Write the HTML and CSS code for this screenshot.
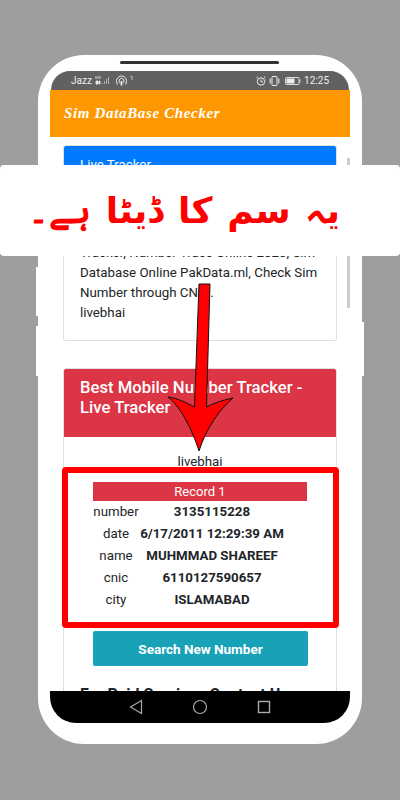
FILE: index.html
```html
<!DOCTYPE html>
<html lang="en">
<head>
  <meta charset="UTF-8">
  <meta name="viewport" content="width=device-width, initial-scale=1.0">
  <title>Sim DataBase Checker</title>
  <link rel="stylesheet" href="styles.css">
</head>
<body>
  <div class="phone">
    <div class="speaker"></div>
    <div class="side-key side-key-left-top"></div>
    <div class="side-key side-key-left-bottom"></div>
    <div class="side-key side-key-right"></div>

    <div class="screen">
      <div class="status-bar">
        <div class="status-group">
          <span>Jazz</span>
          <svg width="15" height="9" viewBox="0 0 15 9">
            <path d="M1 0v3M3 0v3M5 0v3M1 5h2v3H1zM4 5h1v3H4z" stroke="#eee" stroke-width=".8" fill="#eee"/>
            <path d="M7.500 8v-1M9.500 8V5M11.500 8V3M13.500 8V1" stroke="#bbb" stroke-width=".9" fill="none"/>
          </svg>
          <svg class="hotspot" width="14" height="11" viewBox="0 0 14 11" fill="none" stroke="#eee" stroke-width="1">
            <path d="M2.500 9.500C0 6 2.500 1 6.500 1s6.500 5 4 8.500"/>
            <path d="M4.500 8C3.300 6 4.500 3.300 6.500 3.300S9.700 6 8.500 8"/>
            <path d="M6.500 6v4.500" stroke-width="1.800"/>
          </svg>
          <sup class="status-one">1</sup>
        </div>
        <div class="status-group">
          <svg width="10" height="10" viewBox="0 0 10 10" fill="none" stroke="#eee" stroke-width="1">
            <circle cx="5" cy="5.500" r="3.700"/>
            <path d="M5 3.500v2.300h1.800M.5 2 2 .7M9.500 2 8 .7"/>
          </svg>
          <svg width="11" height="10" viewBox="0 0 11 10" fill="none" stroke="#eee" stroke-width="1">
            <rect x="3" y=".5" width="5" height="9" rx=".8"/>
            <path d="M1.200 2.500v5M9.800 2.500v5"/>
          </svg>
          <svg class="battery" width="16" height="8" viewBox="0 0 16 8">
            <rect x=".5" y=".5" width="13.500" height="7" rx="1" fill="none" stroke="#ddd"/>
            <rect x="1.500" y="1.500" width="8" height="5" fill="#eee"/>
            <rect x="14.500" y="2.500" width="1" height="3" fill="#ddd"/>
          </svg>
          <span>12:25</span>
        </div>
      </div>

      <header class="app-bar">Sim DataBase Checker</header>

      <main class="content">
        <section class="card">
          <div class="card-head card-head-blue">Live Tracker</div>
          <div class="card-body">
            <p>Tracker, Number Trace Online 2020, Sim Database Online PakData.ml, Check Sim Number through CNIC.</p>
            <p>livebhai</p>
          </div>
        </section>

        <section class="card card-result">
          <h2 class="card-head card-head-red">Best Mobile Number Tracker - Live Tracker</h2>
          <p class="result-author">livebhai</p>
          <div class="record">
            <div class="record-title">Record 1</div>
            <dl class="record-rows">
              <dt>number</dt><dd>3135115228</dd>
              <dt>date</dt><dd>6/17/2011 12:29:39 AM</dd>
              <dt>name</dt><dd>MUHMMAD SHAREEF</dd>
              <dt>cnic</dt><dd>6110127590657</dd>
              <dt>city</dt><dd>ISLAMABAD</dd>
            </dl>
          </div>
          <button class="search-btn">Search New Number</button>
          <h3 class="paid-title">For Paid Services Contact Us</h3>
        </section>
      </main>

      <div class="scrollbar"></div>

      <nav class="nav-bar">
        <svg width="14" height="16" viewBox="0 0 14 16" fill="none" stroke="#aaa" stroke-width="1.200"><path d="M12.500 1.500v13L1.500 8z"/></svg>
        <svg width="16" height="16" viewBox="0 0 16 16" fill="none" stroke="#aaa" stroke-width="1.200"><circle cx="8" cy="8" r="6.500"/></svg>
        <svg width="14" height="14" viewBox="0 0 14 14" fill="none" stroke="#aaa" stroke-width="1.400"><rect x="1.500" y="1.500" width="11" height="11"/></svg>
      </nav>
    </div>
  </div>

  <!-- things pasted over the screenshot -->
  <div class="banner"><span>یہ</span><span>سم</span><span>کا</span><span>ڈیٹا</span><span>ہے۔</span></div>
  <div class="red-box"></div>
  <svg class="arrow" width="70" height="172" viewBox="0 0 70 172">
    <path d="M32 1 43 1 39.500 124C47 120 56 117 66 115 52 127 39 146 32 168 25 146 13 123 1 114 10 115 20 120 27.500 124Z" fill="#f00" stroke="#111" stroke-width="1"/>
  </svg>
</body>
</html>
```

FILE: styles.css
```css
* {
  box-sizing: border-box;
}

html, body {
  height: 100%;
}

body {
  margin: 0;
  background-color: #9e9e9e;
  font-family: Roboto, sans-serif;
  color: #212529;
  overflow: hidden;
  position: relative;
}

.phone {
  position: relative;
  width: 324px;
  height: 689px;
  margin: 55px 0 0 38px;
  padding: 16px 12px 21px;
  background-color: #fff;
  border-radius: 46px;
}

.speaker {
  position: absolute;
  top: 6px;
  left: 82px;
  width: 159px;
  height: 3px;
  background-color: #333;
  border-radius: 2px;
}

.side-key {
  position: absolute;
  width: 3px;
  background-color: #fff;
}

.side-key-left-top {
  left: -2px;
  top: 212px;
  height: 49px;
}

.side-key-left-bottom {
  left: -2px;
  top: 271px;
  height: 50px;
}

.side-key-right {
  right: -2px;
  top: 267px;
  height: 54px;
}

.screen {
  position: relative;
  height: 652px;
  display: flex;
  flex-direction: column;
  overflow: hidden;
  border-radius: 0 0 26px 26px;
}

.status-bar {
  flex: none;
  height: 19px;
  margin: 0 1px;
  padding: 0 20px;
  display: flex;
  align-items: center;
  justify-content: space-between;
  background-color: #616161;
  border-radius: 24px 24px 0 0;
  color: #eee;
  font-size: 10px;
}

.status-group {
  display: flex;
  align-items: center;
  gap: 3px;
}

.hotspot {
  margin-left: 2px;
}

.status-one {
  font-size: 6px;
  margin: -6px 0 0 -2px;
}

.battery {
  margin-left: 2px;
}

.app-bar {
  flex: none;
  height: 47px;
  padding: 0 14px;
  display: flex;
  align-items: center;
  background-color: #ff9800;
  color: #fff;
  font-family: "Liberation Serif", serif;
  font-style: italic;
  font-weight: bold;
  font-size: 15px;
  letter-spacing: .65px;
  box-shadow: 0 1px 3px rgba(0, 0, 0, .15);
}

.content {
  flex: 1;
  min-height: 0;
  overflow: hidden;
  padding: 8px 13px 0;
  background-color: #fff;
}

.card {
  border: 1px solid #dfdfdf;
  border-radius: 3px;
  overflow: hidden;
}

.card-head {
  margin: 0;
  padding: 9px 16px;
  color: #fff;
}

.card-head-blue {
  background-color: #007bff;
  font-size: 13.300px;
  line-height: 20px;
}

/* the upper lines of this card sit under the banner, so the padding stands in for them */
.card-body {
  padding: 59px 16px 17px;
  font-size: 13.300px;
  line-height: 20px;
}

.card-body p {
  margin: 0;
}

.card-result {
  margin-top: 27px;
}

.card-head-red {
  height: 68px;
  background-color: #dc3545;
  font-size: 16.700px;
  font-weight: 500;
  line-height: 20px;
}

.result-author {
  margin: 17px 0 0;
  font-size: 13.300px;
  line-height: 16px;
  text-align: center;
}

.record {
  margin: 12px 29px 0;
}

.record-title {
  height: 19px;
  background-color: #dc3545;
  color: #fff;
  font-size: 13px;
  line-height: 19px;
  text-align: center;
}

.record-rows {
  display: grid;
  grid-template-columns: 46px 146px;
  grid-auto-rows: 22px;
  margin: 0;
  font-size: 13.300px;
  line-height: 22px;
  text-align: center;
}

.record-rows dd {
  margin: 0;
  font-weight: bold;
  white-space: nowrap;
}

.search-btn {
  display: block;
  width: 215px;
  height: 35px;
  margin: 20px 0 0 29px;
  border: 0;
  border-radius: 2px;
  background-color: #17a2b8;
  color: #fff;
  font-family: Roboto, sans-serif;
  font-size: 13.500px;
  font-weight: bold;
}

.paid-title {
  margin: 19px 16px 0;
  font-size: 16px;
  line-height: 20px;
  white-space: nowrap;
}

.scrollbar {
  position: absolute;
  top: 87px;
  right: 0;
  width: 3px;
  height: 150px;
  background-color: #ccc;
}

.nav-bar {
  flex: none;
  height: 32px;
  padding: 0 79px;
  display: flex;
  align-items: center;
  justify-content: space-between;
  background-color: #000;
}

.banner {
  position: absolute;
  top: 165px;
  left: 0;
  width: 400px;
  height: 91px;
  padding: 0 60px 0 28px;
  display: flex;
  flex-direction: row-reverse;
  align-items: center;
  justify-content: space-between;
  background-color: #fff;
  border-radius: 4px;
  color: #f00;
  font-family: "DejaVu Sans", sans-serif;
  font-size: 36px;
  font-weight: bold;
  line-height: 1.100;
}

.red-box {
  position: absolute;
  top: 467px;
  left: 62px;
  width: 277px;
  height: 161px;
  border: 6px solid #f00;
  border-radius: 4px;
}

.arrow {
  position: absolute;
  top: 283px;
  left: 167px;
}
```
